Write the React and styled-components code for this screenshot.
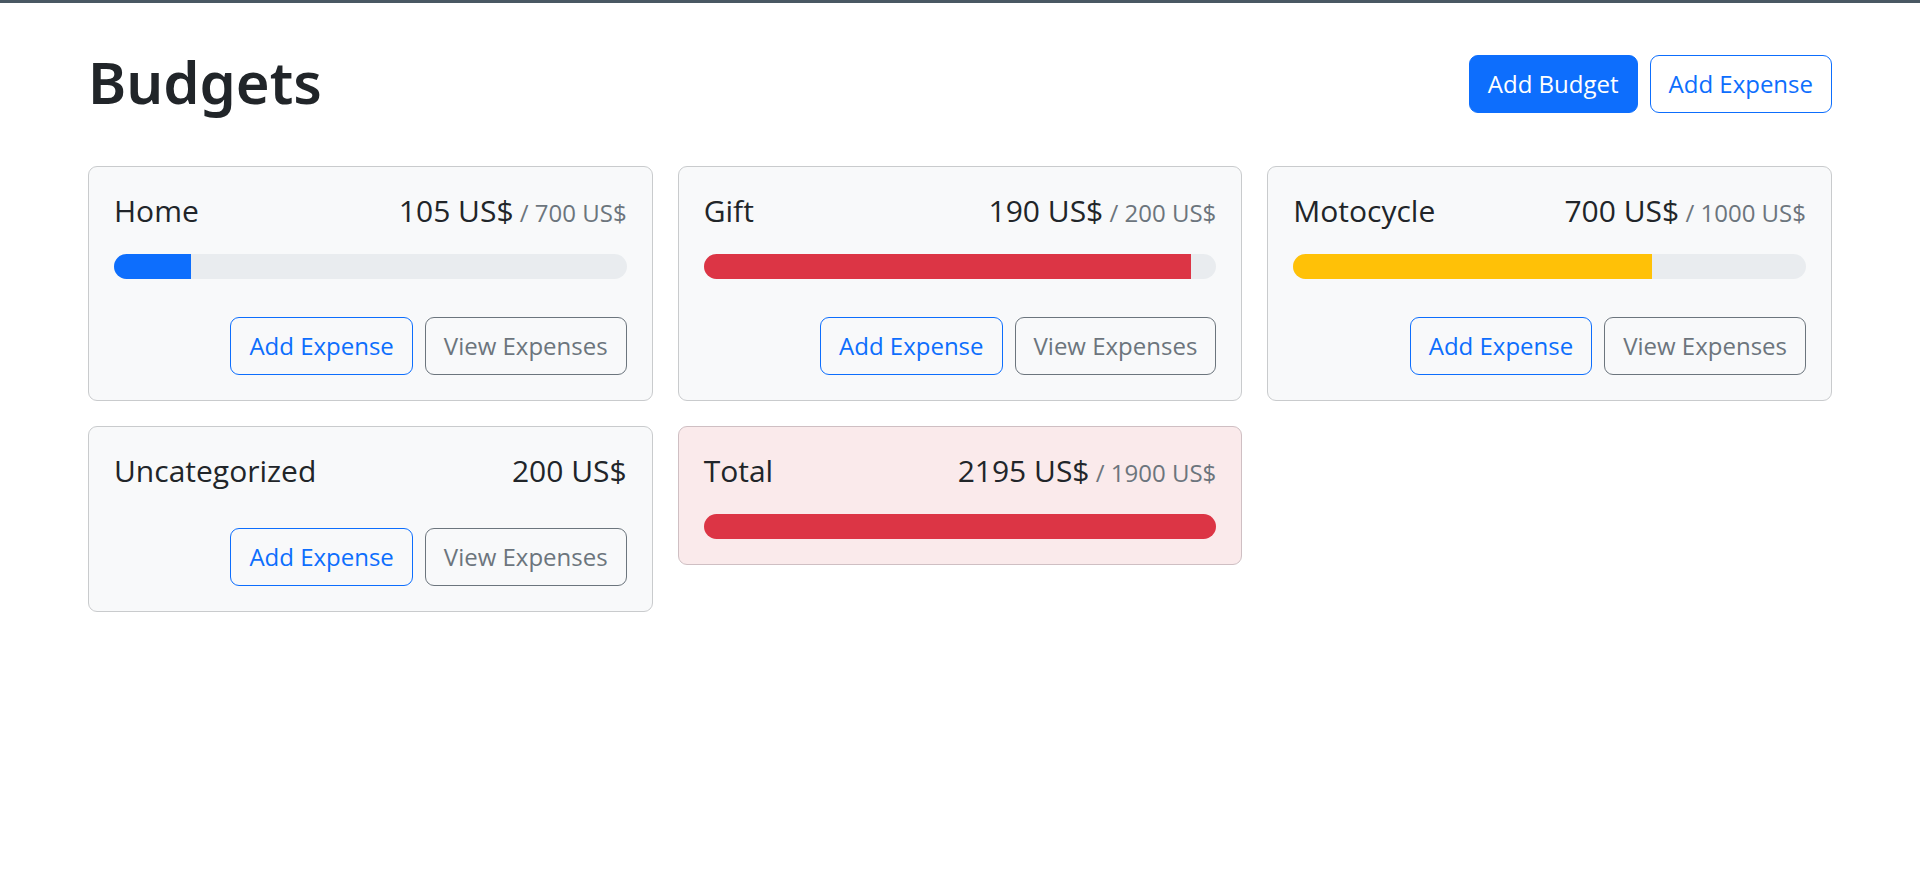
import React from "react";
import styled, { createGlobalStyle } from "styled-components";

const GlobalStyle = createGlobalStyle`
  *, *::before, *::after { box-sizing: border-box; }
  body {
    margin: 0;
    background: #fff;
    color: #212529;
    font-family: "Segoe UI", "Open Sans", "Noto Sans", sans-serif;
    font-size: 24px;
    line-height: 38px;
  }
`;

const Page = styled.div`
  border-top: 3px solid #495863;
  padding: 50px 88px 24px;
`;

const Header = styled.header`
  display: flex;
  align-items: center;
  gap: 12px;
  margin-bottom: 51px;
`;

const Title = styled.h1`
  margin: 0 auto 0 0;
  padding-bottom: 4px;
  font-family: "Segoe UI", "Noto Sans", sans-serif;
  font-size: 58px;
  font-weight: 600;
  line-height: 58px;
`;

const Grid = styled.main`
  display: grid;
  grid-template-columns: repeat(auto-fill, minmax(480px, 1fr));
  gap: 25px;
  align-items: start;
`;

const Card = styled.section`
  padding: 25px;
  border: 1px solid ${(p) => (p.$over ? "#cfbfc3" : "#c9cbcd")};
  border-radius: 9px;
  background: ${(p) => (p.$over ? "#faeaeb" : "#f8f9fa")};
`;

const CardHead = styled.div`
  display: flex;
  justify-content: space-between;
  align-items: baseline;
`;

const Name = styled.h2`
  margin: 0;
  font-size: 30px;
  font-weight: 400;
  line-height: 38px;
`;

const Amount = styled.div`
  font-size: 30px;
  line-height: 38px;
  white-space: nowrap;
`;

const Max = styled.span`
  color: #6c757d;
  font-size: 24px;
  line-height: 24px;
`;

const Track = styled.div`
  height: 25px;
  margin-top: 24px;
  border-radius: 13px;
  background: #e9ecef;
  overflow: hidden;
`;

const Fill = styled.div`
  height: 100%;
  background: ${(p) => p.$color};
`;

const Actions = styled.div`
  display: flex;
  justify-content: flex-end;
  gap: 12px;
  margin-top: 38px;
`;

const Button = styled.button`
  padding: 9px 18px;
  border: 1px solid ${(p) => p.$tone};
  border-radius: 9px;
  background: ${(p) => (p.$solid ? p.$tone : "transparent")};
  color: ${(p) => (p.$solid ? "#fff" : p.$tone)};
  font: inherit;
  cursor: pointer;
`;

const BLUE = "#0d6efd";
const GRAY = "#6c757d";

const budgets = [
  { name: "Home", amount: 105, max: 700 },
  { name: "Gift", amount: 190, max: 200 },
  { name: "Motocycle", amount: 700, max: 1000 },
  { name: "Uncategorized", amount: 200 },
  { name: "Total", amount: 2195, max: 1900, total: true },
];

function barColor(ratio) {
  if (ratio < 0.5) return BLUE;
  if (ratio < 0.75) return "#ffc107";
  return "#dc3545";
}

function BudgetCard({ name, amount, max, total }) {
  const ratio = max ? Math.min(amount / max, 1) : 0;
  return (
    <Card $over={max && amount > max}>
      <CardHead>
        <Name>{name}</Name>
        <Amount>
          {amount} US${max && <Max> / {max} US$</Max>}
        </Amount>
      </CardHead>
      {max && (
        <Track role="progressbar" aria-label={name} aria-valuenow={amount} aria-valuemin={0} aria-valuemax={max}>
          <Fill $color={barColor(ratio)} style={{ width: `${ratio * 100}%` }} />
        </Track>
      )}
      {!total && (
        <Actions>
          <Button type="button" $tone={BLUE}>Add Expense</Button>
          <Button type="button" $tone={GRAY}>View Expenses</Button>
        </Actions>
      )}
    </Card>
  );
}

export default function App() {
  return (
    <>
      <GlobalStyle />
      <Page>
        <Header>
          <Title>Budgets</Title>
          <Button type="button" $tone={BLUE} $solid>Add Budget</Button>
          <Button type="button" $tone={BLUE}>Add Expense</Button>
        </Header>
        <Grid>
          {budgets.map((b) => (
            <BudgetCard key={b.name} {...b} />
          ))}
        </Grid>
      </Page>
    </>
  );
}
